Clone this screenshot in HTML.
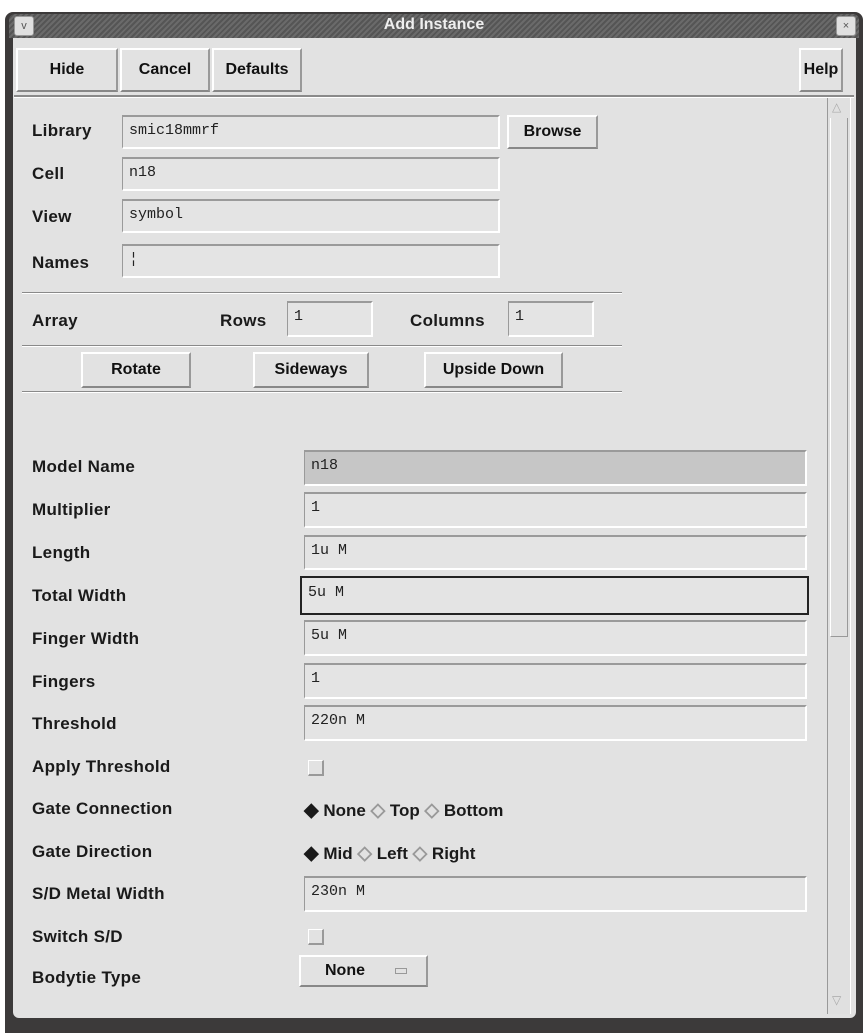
<!DOCTYPE html>
<html><head><style>
body{margin:0;width:868px;height:1033px;background:#fff;position:relative;overflow:hidden;font-family:"Liberation Sans",sans-serif;}
.a{position:absolute;}
.win{left:5px;top:12px;width:858px;height:1021px;background:#3c3a3a;border-radius:8px 8px 0 0;}
.body{left:13px;top:38px;width:843px;height:980px;background:#e2e2e2;border-radius:0 0 6px 6px;}
.title{left:9px;top:14px;width:850px;height:24px;background:repeating-linear-gradient(135deg,#6a6a6a 0 2px,#555 2px 4px);border-radius:6px 6px 0 0;}
.tt{left:0;width:868px;top:16px;text-align:center;color:#eee;font-size:16px;font-weight:bold;}
.tb{width:18px;height:18px;background:#e0e0e0;border:1px solid #999;border-radius:3px;font-size:11px;text-align:center;line-height:18px;color:#555;}
.btn{background:#e2e2e2;border-top:2px solid #fff;border-left:2px solid #fff;border-right:2px solid #999;border-bottom:2px solid #888;box-sizing:border-box;font-weight:bold;font-size:16px;text-align:center;color:#111;}
.lbl{font-weight:bold;font-size:17px;letter-spacing:0.3px;color:#1a1a1a;left:32px;}
.inp{box-sizing:border-box;border-top:2px solid #9a9a9a;border-left:1px solid #9a9a9a;border-right:2px solid #fff;border-bottom:2px solid #fff;background:#e4e4e4;font-family:"Liberation Mono",monospace;font-size:15px;padding:5px 0 0 6px;color:#222;}
.hr{height:1px;background:#8a8a8a;border-bottom:1px solid #fff;left:22px;width:600px;}
.cb{width:16px;height:16px;box-sizing:border-box;border-top:1px solid #fff;border-left:1px solid #fff;border-right:2px solid #999;border-bottom:2px solid #999;}
.rad{font-weight:bold;font-size:17px;color:#1a1a1a;}
.d{color:#999;font-size:19px;}
</style></head><body>
<div class="a win"></div>
<div class="a body"></div>
<div class="a title"></div>
<div class="a tt">Add Instance</div>
<div class="a tb" style="left:14px;top:16px;">v</div>
<div class="a tb" style="left:836px;top:16px;">×</div>

<div class="a btn" style="left:16px;top:48px;width:102px;height:44px;line-height:40px;">Hide</div>
<div class="a btn" style="left:120px;top:48px;width:90px;height:44px;line-height:40px;">Cancel</div>
<div class="a btn" style="left:212px;top:48px;width:90px;height:44px;line-height:40px;">Defaults</div>
<div class="a btn" style="left:799px;top:48px;width:44px;height:44px;line-height:40px;">Help</div>
<div class="a" style="left:14px;top:95px;width:840px;height:2px;background:#8a8a8a;border-bottom:1px solid #fff;"></div>

<div class="a" style="left:827px;top:98px;width:22px;height:916px;border-left:1px solid #999;border-right:1px solid #fff;background:#e0e0e0;"></div>
<div class="a" style="left:830px;top:118px;width:16px;height:518px;border-left:1px solid #fff;border-right:1px solid #999;border-bottom:1px solid #999;"></div>
<div class="a" style="left:832px;top:100px;font-size:12px;color:#aaa;">△</div>
<div class="a" style="left:832px;top:993px;font-size:12px;color:#aaa;">▽</div>

<div class="a lbl" style="top:121px;">Library</div>
<div class="a inp" style="left:122px;top:115px;width:378px;height:34px;">smic18mmrf</div>
<div class="a btn" style="left:507px;top:115px;width:91px;height:34px;line-height:30px;">Browse</div>
<div class="a lbl" style="top:164px;">Cell</div>
<div class="a inp" style="left:122px;top:157px;width:378px;height:34px;">n18</div>
<div class="a lbl" style="top:207px;">View</div>
<div class="a inp" style="left:122px;top:199px;width:378px;height:34px;">symbol</div>
<div class="a lbl" style="top:253px;">Names</div>
<div class="a inp" style="left:122px;top:244px;width:378px;height:34px;">¦</div>
<div class="a hr" style="top:292px;"></div>
<div class="a lbl" style="top:311px;">Array</div>
<div class="a lbl" style="left:220px;top:311px;">Rows</div>
<div class="a inp" style="left:287px;top:301px;width:86px;height:36px;">1</div>
<div class="a lbl" style="left:410px;top:311px;">Columns</div>
<div class="a inp" style="left:508px;top:301px;width:86px;height:36px;">1</div>
<div class="a hr" style="top:345px;"></div>
<div class="a btn" style="left:81px;top:352px;width:110px;height:36px;line-height:32px;">Rotate</div>
<div class="a btn" style="left:253px;top:352px;width:116px;height:36px;line-height:32px;">Sideways</div>
<div class="a btn" style="left:424px;top:352px;width:139px;height:36px;line-height:32px;">Upside Down</div>
<div class="a hr" style="top:391px;"></div>

<div class="a lbl" style="top:457px;">Model Name</div>
<div class="a inp" style="left:304px;top:450px;width:503px;height:36px;background:#c6c6c6;">n18</div>
<div class="a lbl" style="top:500px;">Multiplier</div>
<div class="a inp" style="left:304px;top:492px;width:503px;height:36px;">1</div>
<div class="a lbl" style="top:543px;">Length</div>
<div class="a inp" style="left:304px;top:535px;width:503px;height:35px;">1u M</div>
<div class="a lbl" style="top:586px;">Total Width</div>
<div class="a inp" style="left:300px;top:576px;width:509px;height:39px;border:2px solid #222;padding-top:6px;">5u M</div>
<div class="a lbl" style="top:629px;">Finger Width</div>
<div class="a inp" style="left:304px;top:620px;width:503px;height:36px;">5u M</div>
<div class="a lbl" style="top:672px;">Fingers</div>
<div class="a inp" style="left:304px;top:663px;width:503px;height:36px;">1</div>
<div class="a lbl" style="top:714px;">Threshold</div>
<div class="a inp" style="left:304px;top:705px;width:503px;height:36px;">220n M</div>
<div class="a lbl" style="top:757px;">Apply Threshold</div>
<div class="a cb" style="left:308px;top:760px;"></div>
<div class="a lbl" style="top:799px;">Gate Connection</div>
<div class="a rad" style="left:304px;top:799px;"><span style="font-size:19px">◆</span> None <span class="d">◇</span> Top <span class="d">◇</span> Bottom</div>
<div class="a lbl" style="top:842px;">Gate Direction</div>
<div class="a rad" style="left:304px;top:842px;"><span style="font-size:19px">◆</span> Mid <span class="d">◇</span> Left <span class="d">◇</span> Right</div>
<div class="a lbl" style="top:884px;">S/D Metal Width</div>
<div class="a inp" style="left:304px;top:876px;width:503px;height:36px;">230n M</div>
<div class="a lbl" style="top:927px;">Switch S/D</div>
<div class="a cb" style="left:308px;top:929px;"></div>
<div class="a lbl" style="top:968px;">Bodytie Type</div>
<div class="a btn" style="left:299px;top:955px;width:129px;height:32px;line-height:28px;text-align:left;padding-left:24px;">None <span style="display:inline-block;width:10px;height:4px;border:1px solid #999;margin-left:26px;vertical-align:middle;"></span></div>
</body></html>
